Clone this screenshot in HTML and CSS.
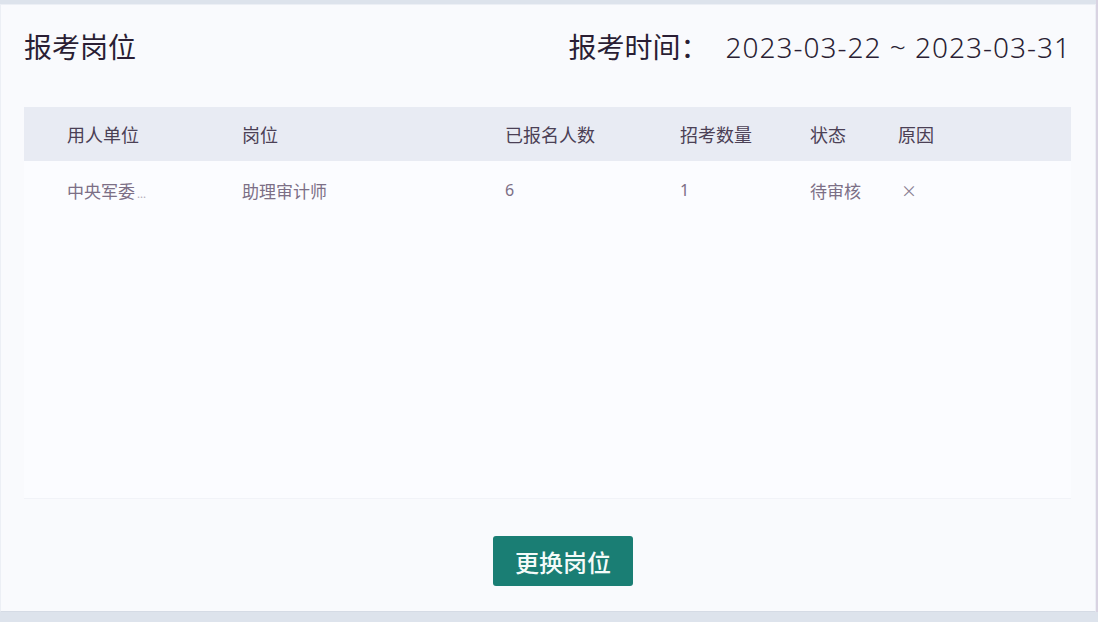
FILE: index.html
```html
<!DOCTYPE html>
<html lang="zh">
<head>
<meta charset="utf-8">
<title>报考岗位</title>
<link rel="stylesheet" href="styles.css">
</head>
<body>
<div class="page">
  <div class="card">
    <div class="top">
      <h1 class="title">报考岗位</h1>
      <div class="period"><span class="label">报考时间：</span><span class="dates">2023-03-22 ~ 2023-03-31</span></div>
    </div>
    <div class="table">
      <div class="row head">
        <div>用人单位</div>
        <div>岗位</div>
        <div>已报名人数</div>
        <div>招考数量</div>
        <div>状态</div>
        <div>原因</div>
      </div>
      <div class="row body">
        <div>中央军委<span class="ell">...</span></div>
        <div>助理审计师</div>
        <div class="num">6</div>
        <div class="num">1</div>
        <div>待审核</div>
        <div class="x">×</div>
      </div>
    </div>
    <div class="actions">
      <button class="btn">更换岗位</button>
    </div>
  </div>
</div>
</body>
</html>
```

FILE: styles.css
```css
html, body {
  margin: 0;
  padding: 0;
}
body {
  background: #dde3ec;
  font-family: "Noto Sans", "Noto Sans CJK SC", sans-serif;
  width: 1098px;
  height: 622px;
  overflow: hidden;
}
.page {
  padding-top: 4px;
  padding-right: 2px;
  height: 608px;
  background: linear-gradient(to right, #dde3ec 0, #dde3ec 1096px, #d9d3e2 1096px);
}
.card {
  box-sizing: border-box;
  width: 1096px;
  height: 608px;
  background: #f9fafd;
  border: 1px solid #eceff5;
  border-bottom: 1px solid #d5dbe5;
  padding: 26px 24px 0 23px;
  display: flex;
  flex-direction: column;
}
.top {
  display: flex;
  justify-content: space-between;
  align-items: baseline;
  height: 30px;
}
.title {
  margin: 0;
  font-size: 28px;
  line-height: 30px;
  font-weight: 400;
  color: #2a1e34;
  font-family: "Noto Sans CJK SC", sans-serif;
}
.period {
  font-size: 28px;
  line-height: 30px;
  color: #2a1e34;
}
.period .label {
  font-family: "Noto Sans CJK SC", sans-serif;
  margin-right: 17px;
}
.period .dates {
  font-family: "Noto Sans", sans-serif;
  font-weight: 300;
  letter-spacing: 1px;
}
.table {
  margin-top: 46px;
  height: 391px;
  background: #fbfcff;
  border-bottom: 1px solid #f1f3f8;
}
.row {
  display: grid;
  grid-template-columns: 175px 263px 175px 130px 88px 1fr;
  padding-left: 43px;
  align-items: center;
  font-family: "Noto Sans CJK SC", sans-serif;
}
.head {
  height: 54px;
  background: #e8ebf3;
  font-size: 18px;
  color: #4b4055;
}
.body {
  height: 58px;
  font-size: 17px;
  color: #7c6f86;
}
.body .num {
  font-family: "Noto Sans", sans-serif;
  font-size: 16px;
}
.ell {
  font-size: 11px;
  color: #b3abb9;
  margin-left: 2px;
}
.x {
  font-size: 16px;
  padding-left: 3px;
  color: #8a7f92;
}
.actions {
  display: flex;
  padding-left: 469px;
  margin-top: 37px;
}
.btn {
  width: 140px;
  height: 50px;
  border: none;
  border-radius: 3px;
  background: #1a7e74;
  color: #f4fbf9;
  font-family: "Noto Sans CJK SC", sans-serif;
  font-size: 24px;
  font-weight: 500;
  padding: 0;
}
```
